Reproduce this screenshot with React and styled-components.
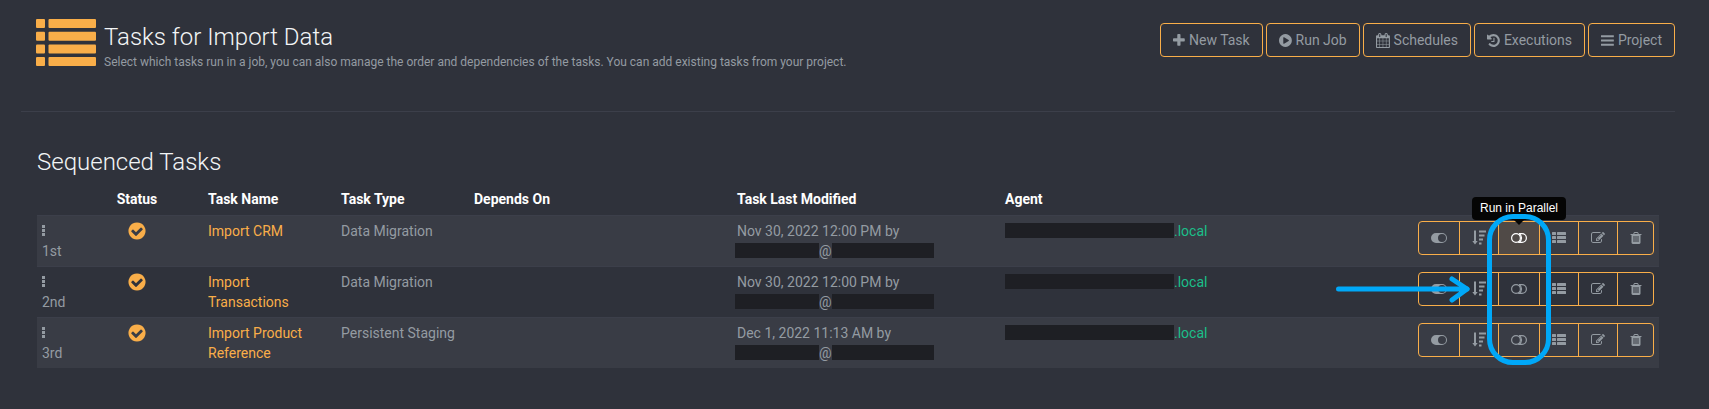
import React from 'react';
import styled, { createGlobalStyle, css } from 'styled-components';

const Colors = {
  page: '#2f323b',
  stripe: '#393c45',
  line: '#3c3f4a',
  text: '#949ba2',
  amber: '#f9ae49',
  heading: '#f3f5f6',
  green: '#1bbf89',
  redacted: '#1e1f24',
  marker: '#00a8f8',
};

// Drawn on the 1792 unit icon grid, width is the advance of each glyph
const icons = {
  plus: {
    width: 1408,
    path: 'M1600 736v192q0 40-28 68t-68 28h-416v416q0 40-28 68t-68 28h-192q-40 0-68-28t-28-68v-416h-416q-40 0-68-28t-28-68v-192q0-40 28-68t68-28h416v-416q0-40 28-68t68-28h192q40 0 68 28t28 68v416h416q40 0 68 28t28 68z',
  },
  play: {
    width: 1536,
    path: 'M896 128q209 0 385.5 103t279.5 279.5 103 385.5-103 385.5-279.5 279.5-385.5 103-385.5-103-279.5-279.5-103-385.5 103-385.5 279.5-279.5 385.5-103zm384 823q32-18 32-55t-32-55l-544-320q-31-19-64-1-32 19-32 56v640q0 37 32 56 16 8 32 8 17 0 32-9z',
  },
  calendar: {
    width: 1664,
    path: 'M192 1664h288v-288h-288v288zm352 0h320v-288h-320v288zm-352-352h288v-320h-288v320zm352 0h320v-320h-320v320zm-352-384h288v-288h-288v288zm736 736h320v-288h-320v288zm-384-736h320v-288h-320v288zm768 736h288v-288h-288v288zm-384-352h320v-320h-320v320zm-352-864v-288q0-13-9.5-22.5t-22.5-9.5h-64q-13 0-22.5 9.5t-9.5 22.5v288q0 13 9.5 22.5t22.5 9.5h64q13 0 22.5-9.5t9.5-22.5zm736 864h288v-320h-288v320zm-384-384h320v-288h-320v288zm384 0h288v-288h-288v288zm32-480v-288q0-13-9.5-22.5t-22.5-9.5h-64q-13 0-22.5 9.5t-9.5 22.5v288q0 13 9.5 22.5t22.5 9.5h64q13 0 22.5-9.5t9.5-22.5zm384-64v1280q0 52-38 90t-90 38h-1408q-52 0-90-38t-38-90v-1280q0-52 38-90t90-38h128v-96q0-66 47-113t113-47h64q66 0 113 47t47 113v96h384v-96q0-66 47-113t113-47h64q66 0 113 47t47 113v96h128q52 0 90 38t38 90z',
  },
  history: {
    width: 1536,
    path: 'M1664 896q0 156-61 298t-164 245-245 164-298 61q-172 0-327-72.5t-264-204.5q-7-10-6.5-22.5t8.5-20.5l137-138q10-9 25-9 16 2 23 12 73 95 179 147t225 52q104 0 198.5-40.5t163.5-109.5 109.5-163.5 40.5-198.5-40.5-198.5-109.5-163.5-163.5-109.5-198.5-40.5q-98 0-188 35.5t-160 101.5l137 138q31 30 14 69-17 40-59 40h-448q-26 0-45-19t-19-45v-448q0-42 40-59 39-17 69 14l130 129q107-101 244.5-156.5t284.5-55.5q156 0 298 61t245 164 164 245 61 298zm-640-288v448q0 14-9 23t-23 9h-320q-14 0-23-9t-9-23v-64q0-14 9-23t23-9h224v-352q0-14 9-23t23-9h64q14 0 23 9t9 23z',
  },
  bars: {
    width: 1536,
    path: 'M1664 1344v128q0 26-19 45t-45 19h-1408q-26 0-45-19t-19-45v-128q0-26 19-45t45-19h1408q26 0 45 19t19 45zm0-512v128q0 26-19 45t-45 19h-1408q-26 0-45-19t-19-45v-128q0-26 19-45t45-19h1408q26 0 45 19t19 45zm0-512v128q0 26-19 45t-45 19h-1408q-26 0-45-19t-19-45v-128q0-26 19-45t45-19h1408q26 0 45 19t19 45z',
  },
  check: {
    width: 1792,
    path: 'M1412 734q0-28-18-46l-91-90q-19-19-45-19t-45 19l-408 407-226-226q-19-19-45-19t-45 19l-91 90q-18 18-18 46 0 27 18 45l362 362q19 19 45 19 27 0 46-19l543-543q18-18 18-45zm252 162q0 209-103 385.5t-279.5 279.5-385.5 103-385.5-103-279.5-279.5-103-385.5 103-385.5 279.5-279.5 385.5-103 385.5 103 279.5 279.5 103 385.5z',
  },
  edit: {
    width: 1792,
    path: 'M888 1184l116-116-152-152-116 116v56h96v96h56zm440-720q-16-16-33 1l-350 350q-17 17-1 33t33-1l350-350q17-17 1-33zm80 594v190q0 119-84.5 203.5t-203.5 84.5h-832q-119 0-203.5-84.5t-84.5-203.5v-832q0-119 84.5-203.5t203.5-84.5h832q63 0 117 25 15 7 18 23 3 17-9 29l-49 49q-14 14-32 8-23-6-45-6h-832q-66 0-113 47t-47 113v832q0 66 47 113t113 47h832q66 0 113-47t47-113v-126q0-13 9-22l64-64q15-15 35-7t20 29zm-96-738l288 288-672 672h-288v-288zm444 132l-92 92-288-288 92-92q28-28 68-28t68 28l152 152q28 28 28 68t-28 68z',
  },
  trash: {
    width: 1792,
    path: 'M704 1376v-704q0-14-9-23t-23-9h-64q-14 0-23 9t-9 23v704q0 14 9 23t23 9h64q14 0 23-9t9-23zm256 0v-704q0-14-9-23t-23-9h-64q-14 0-23 9t-9 23v704q0 14 9 23t23 9h64q14 0 23-9t9-23zm256 0v-704q0-14-9-23t-23-9h-64q-14 0-23 9t-9 23v704q0 14 9 23t23 9h64q14 0 23-9t9-23zm-544-992h448l-48-117q-7-9-17-11h-317q-10 2-17 11zm928 32v64q0 14-9 23t-23 9h-96v948q0 83-47 143.5t-113 60.5h-832q-66 0-113-58.5t-47-141.5v-952h-96q-14 0-23-9t-9-23v-64q0-14 9-23t23-9h309l70-167q15-37 54-63t79-26h320q40 0 79 26t54 63l70 167h309q14 0 23 9t9 23z',
  },
};

const Glyph = ({ name, size = 14 }) => {
  const { width, path } = icons[name];
  return (
    <svg
      width={size * width / 1792}
      height={size}
      viewBox={`${(1792 - width) / 2} 0 ${width} 1792`}
      fill='currentColor'
      aria-hidden='true'
    >
      <path d={path} />
    </svg>
  )
}

const ToggleOn = () => (
  <svg width='16' height='10' viewBox='0 0 16 10' fill='currentColor' aria-hidden='true'>
    <path fillRule='evenodd' d='M5 0H11A5 5 0 0 1 11 10H5A5 5 0 0 1 5 0ZM11 1A4 4 0 0 0 11 9A4 4 0 0 0 11 1Z' />
  </svg>
)

const Parallel = () => (
  <svg width='16' height='10' viewBox='0 0 16 10' fill='none' stroke='currentColor' strokeWidth='1.2' aria-hidden='true'>
    <circle cx='5' cy='5' r='4.4' />
    <path d='M8 0.6H11A4.4 4.4 0 0 1 11 9.4H8C11.4 7.2 11.4 2.8 8 0.6' />
  </svg>
)

const SortDown = () => (
  <svg width='14' height='15' viewBox='0 0 14 15' fill='currentColor' aria-hidden='true'>
    <path d='M2 0.5H4V11H5.7L3 14.5L0.3 11H2ZM7 0.5H14V2.5H7ZM7 4.5H12.5V6.5H7ZM7 8.5H11V10.5H7ZM7 12.5H9.5V14.5H7Z' />
  </svg>
)

const TaskListLogo = () => (
  <svg width='60' height='47' viewBox='0 0 60 47' fill='currentColor' aria-hidden='true'>
    {[0, 12.7, 25.4, 38].map(y => (
      <React.Fragment key={y}>
        <rect x='0' y={y} width='9' height='9' rx='1' />
        <rect x='12.5' y={y} width='47.5' height='9' rx='1' />
      </React.Fragment>
    ))}
  </svg>
)

const List = () => (
  <svg width='14' height='12' viewBox='0 0 14 12' fill='currentColor' aria-hidden='true'>
    {[0, 4, 8].map(y => (
      <React.Fragment key={y}>
        <rect x='0' y={y} width='4' height='3' rx='0.5' />
        <rect x='5' y={y} width='9' height='3' rx='0.5' />
      </React.Fragment>
    ))}
  </svg>
)

const Grip = () => (
  <svg width='3' height='11' viewBox='0 0 3 11' fill='currentColor' aria-hidden='true'>
    <path d='M0 0H3V3H0ZM0 4H3V7H0ZM0 8H3V11H0Z' />
  </svg>
)

const GlobalStyle = createGlobalStyle`
  * {
    box-sizing: border-box;
  }
  body {
    margin: 0;
    background: ${Colors.page};
    color: ${Colors.text};
    font: 14px/20px Roboto, sans-serif;
  }
`
const Page = styled.main`
  padding: 17px 34px 40px 21px;
`
const Header = styled.header`
  display: flex;
  align-items: flex-start;
  height: 95px;
  padding-left: 15px;
  border-bottom: 1px solid ${Colors.line};
`
const Logo = styled.div`
  display: flex;
  margin: 2px 8px 0 0;
  color: ${Colors.amber};
`
const Heading = styled.div`
  flex: 1;
  padding-top: 7px;
`
const Title = styled.h1`
  margin: 0;
  font-size: 24px;
  font-weight: 300;
  line-height: 27px;
  color: ${Colors.heading};
`
const Subtitle = styled.p`
  margin: 2px 0 0;
  font-size: 12px;
  line-height: 18px;
`
const Toolbar = styled.div`
  display: flex;
  gap: 3px;
  padding-top: 6px;
`
const Button = styled.button`
  display: flex;
  align-items: center;
  gap: 4px;
  height: 34px;
  padding: 0 12px;
  border: 1px solid ${Colors.amber};
  border-radius: 4px;
  background: transparent;
  color: ${Colors.text};
  font: inherit;
`
const Panel = styled.section`
  padding: 37px 16px 0;
`
const PanelTitle = styled(Title).attrs({ as: 'h2' })``
const Table = styled.table`
  width: 100%;
  margin-top: 8px;
  table-layout: fixed;
  border-collapse: collapse;
`
const Col = styled.col`
  width: ${({ $width }) => $width};
`
const Th = styled.th`
  height: 31px;
  padding: 5px;
  text-align: ${({ $center }) => $center ? 'center' : 'left'};
  font-weight: 700;
  color: #fff;
`
const Tr = styled.tr`
  &:nth-child(odd) {
    background: ${Colors.stripe};
  }
`
const Td = styled.td`
  height: 51px;
  padding: 5px;
  border-top: 1px solid ${Colors.line};
  vertical-align: top;
  text-align: ${({ $center }) => $center ? 'center' : 'left'};
`
const Order = styled.div`
  display: flex;
  flex-direction: column;
`
const Handle = styled.span`
  display: flex;
  align-items: center;
  height: 20px;
`
const Status = styled.span`
  display: flex;
  justify-content: center;
  align-items: center;
  height: 20px;
  color: ${Colors.amber};
`
const TaskLink = styled.a`
  color: ${Colors.amber};
  text-decoration: none;
`
const Account = styled.div`
  display: flex;
  align-items: center;
  margin-left: -2px;
`
const Redacted = styled.span`
  display: block;
  width: ${({ $width }) => $width}px;
  height: 15px;
  background: ${Colors.redacted};
`
const Agent = styled.div`
  display: flex;
  align-items: center;
  color: ${Colors.green};
`
const Actions = styled.div`
  position: relative;
  display: grid;
  grid-template-columns: 41px 39px 41px 39px 39px 37px;
  justify-content: end;
  height: 34px;
`
const Action = styled.button`
  position: relative;
  display: flex;
  align-items: center;
  justify-content: center;
  margin-right: -1px;
  padding: 0;
  border: 1px solid ${Colors.amber};
  background: transparent;
  color: ${Colors.text};
  font: inherit;

  &:first-child {
    border-radius: 4px 0 0 4px;
  }
  &:nth-child(6) {
    margin-right: 0;
    border-radius: 0 4px 4px 0;
  }
  ${({ $active }) => $active && css`
    background: #504a47;
    color: #fff;
  `}
`
const Tooltip = styled.span`
  position: absolute;
  bottom: 34px;
  left: 50%;
  transform: translateX(-50%);
  padding: 2px 8px 3px;
  border-radius: 4px;
  background: #050505;
  color: #fff;
  font: 12px/18px 'Liberation Sans', sans-serif;
  white-space: nowrap;

  &::after {
    content: '';
    position: absolute;
    top: 100%;
    left: 50%;
    margin-left: -5px;
    border: 5px solid transparent;
    border-top-color: #050505;
    border-bottom: 0;
  }
`
const Highlight = styled.span`
  position: absolute;
  z-index: 2;
  top: -8px;
  left: -12px;
  width: 64px;
  height: 151px;
  border: 5px solid ${Colors.marker};
  border-radius: 26px;
  pointer-events: none;
`
const Arrow = styled.svg`
  position: absolute;
  z-index: 2;
  top: 4px;
  right: 182px;
  pointer-events: none;
`

const tools = [
  { icon: 'plus', label: 'New Task' },
  { icon: 'play', label: 'Run Job' },
  { icon: 'calendar', label: 'Schedules' },
  { icon: 'history', label: 'Executions' },
  { icon: 'bars', label: 'Project' },
];

const tasks = [
  { order: '1st', name: 'Import CRM', type: 'Data Migration', modified: 'Nov 30, 2022 12:00 PM by', hovered: true },
  { order: '2nd', name: 'Import Transactions', type: 'Data Migration', modified: 'Nov 30, 2022 12:00 PM by', pointed: true },
  { order: '3rd', name: 'Import Product Reference', type: 'Persistent Staging', modified: 'Dec 1, 2022 11:13 AM by' },
];

const TaskActions = ({ hovered, pointed }) => (
  <Actions>
    <Action aria-label='Enabled'><ToggleOn /></Action>
    <Action aria-label='Reorder'><SortDown /></Action>
    <Action aria-label='Run in Parallel' $active={hovered}>
      <Parallel />
      {hovered && <Tooltip role='tooltip'>Run in Parallel</Tooltip>}
      {hovered && <Highlight />}
    </Action>
    <Action aria-label='Details'><List /></Action>
    <Action aria-label='Edit'><Glyph name='edit' /></Action>
    <Action aria-label='Delete'><Glyph name='trash' /></Action>
    {pointed && (
      <Arrow width='136' height='28' viewBox='0 0 136 28' fill='none' stroke={Colors.marker} strokeWidth='5' strokeLinecap='round' strokeLinejoin='round' aria-hidden='true'>
        <path d='M2.5 13H131' />
        <path d='M116 3L131 13L116 24' />
      </Arrow>
    )}
  </Actions>
)

const Task = ({ task }) => (
  <Tr>
    <Td>
      <Order>
        <Handle><Grip /></Handle>
        {task.order}
      </Order>
    </Td>
    <Td $center><Status><Glyph name='check' size={20} /></Status></Td>
    <Td><TaskLink href='#'>{task.name}</TaskLink></Td>
    <Td>{task.type}</Td>
    <Td />
    <Td>
      {task.modified}
      <Account>
        <Redacted $width={84} />
        @
        <Redacted $width={102} />
      </Account>
    </Td>
    <Td>
      <Agent>
        <Redacted $width={169} />
        .local
      </Agent>
    </Td>
    <Td><TaskActions hovered={task.hovered} pointed={task.pointed} /></Td>
  </Tr>
)

const App = () => (
  <Page>
    <GlobalStyle />
    <Header>
      <Logo><TaskListLogo /></Logo>
      <Heading>
        <Title>Tasks for Import Data</Title>
        <Subtitle>
          Select which tasks run in a job, you can also manage the order and dependencies of the tasks. You can add existing tasks from your project.
        </Subtitle>
      </Heading>
      <Toolbar>
        {tools.map(({ icon, label }) => (
          <Button key={label}><Glyph name={icon} size={15} />{label}</Button>
        ))}
      </Toolbar>
    </Header>
    <Panel>
      <PanelTitle>Sequenced Tasks</PanelTitle>
      <Table>
        <colgroup>
          <Col $width='34px' />
          <Col $width='132px' />
          <Col $width='133px' />
          <Col $width='133px' />
          <Col $width='263px' />
          <Col $width='268px' />
          <Col $width='auto' />
          <Col $width='246px' />
        </colgroup>
        <thead>
          <tr>
            <Th />
            <Th $center>Status</Th>
            <Th>Task Name</Th>
            <Th>Task Type</Th>
            <Th>Depends On</Th>
            <Th>Task Last Modified</Th>
            <Th>Agent</Th>
            <Th />
          </tr>
        </thead>
        <tbody>
          {tasks.map(task => <Task key={task.order} task={task} />)}
        </tbody>
      </Table>
    </Panel>
  </Page>
)

export default App;
